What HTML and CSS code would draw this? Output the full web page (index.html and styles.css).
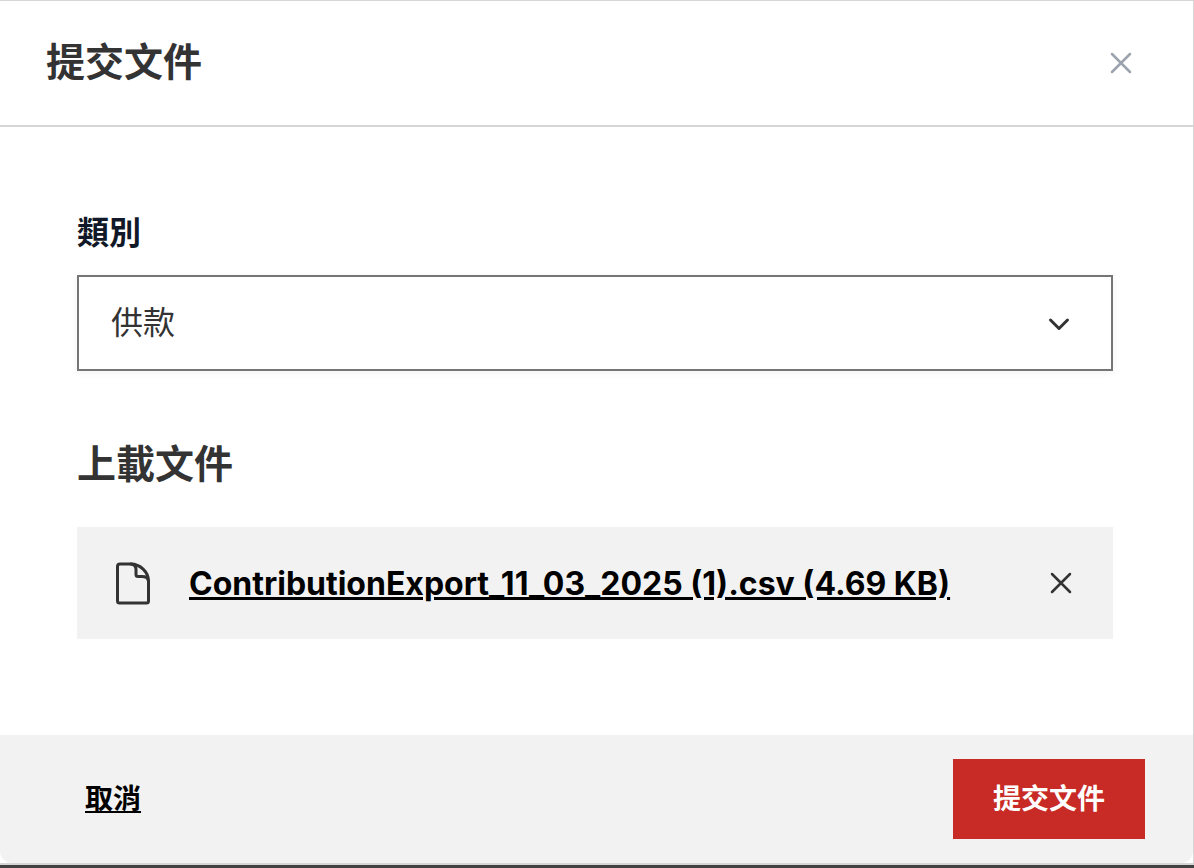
FILE: index.html
```
<!DOCTYPE html>
<html lang="zh-Hant">

<head>
    <meta charset="UTF-8">
    <meta name="viewport" content="width=device-width, initial-scale=1.0">
    <title>提交文件</title>
    <link rel="stylesheet" href="styles.css">
</head>

<body>

    <form class="modal">
        <div class="modal-header">
            <h1 class="title">提交文件</h1>
            <button type="button" class="icon-button close-button" aria-label="關閉">
                <svg width="24" height="24" viewBox="0 0 24 24">
                    <path d="M3 3L21 21M21 3L3 21"/>
                </svg>
            </button>
        </div>

        <div class="modal-body">
            <label class="label" for="category">類別</label>
            <div class="select-wrap">
                <select class="select" id="category">
                    <option>供款</option>
                </select>
                <svg class="chevron" width="24" height="24" viewBox="0 0 24 24">
                    <path d="M3.500 8L12 16.500L20.500 8"/>
                </svg>
            </div>

            <h2 class="title">上載文件</h2>
            <div class="file">
                <svg class="file-icon" width="40" height="48" viewBox="0 -1 40 48">
                    <path d="M7 4H18C27 4 35.500 12 35.500 21V41Q35.500 43 33.500 43H6.500Q4.500 43 4.500 41V6.500Q4.500 4 7 4Z"/>
                    <path d="M18 4C21.500 4.500 23 6.500 23 9.500V14.500Q23 16.500 25 16.500H29C32.500 16.500 35 18 35.500 21"/>
                </svg>
                <a class="file-link" href="#">ContributionExport_11_03_2025 (1).csv (4.69 KB)</a>
                <button type="button" class="icon-button" aria-label="移除">
                    <svg width="24" height="24" viewBox="0 0 24 24">
                        <path d="M3 3L21 21M21 3L3 21"/>
                    </svg>
                </button>
            </div>
        </div>

        <div class="modal-footer">
            <button type="button" class="cancel">取消</button>
            <button type="submit" class="submit">提交文件</button>
        </div>
    </form>

</body>

</html>
```

FILE: styles.css
```
* {
    box-sizing: border-box;
}

body {
    margin: 0;
    background-color: #434243;
    color: #333;
    font-family: Inter, "Noto Sans CJK TC", sans-serif;
}

button,
select {
    font-family: inherit;
    cursor: pointer;
}

svg {
    display: block;
    fill: none;
    stroke: #333;
    stroke-width: 2.5;
    stroke-linecap: round;
    stroke-linejoin: round;
}

.modal {
    background-color: #fff;
    border: 1px solid #d6d6d6;
    border-left: none;
    border-bottom-width: 2px;
}

.modal-header {
    display: flex;
    justify-content: space-between;
    align-items: center;
    padding: 38px 60px 38px 46px;
    border-bottom: 2px solid #d6d6d6;
}

.title {
    margin: 0;
    padding-bottom: 2px;
    font-size: 39px;
    line-height: 46px;
    font-weight: 700;
}

.icon-button {
    padding: 0;
    border: none;
    background: none;
}

.close-button svg {
    stroke: #9ca3af;
}

.modal-body {
    padding: 82px 80px 96px 77px;
}

.label {
    display: block;
    margin-bottom: 18px;
    color: #111827;
    font-size: 32px;
    line-height: 48px;
    font-weight: 700;
}

.select-wrap {
    position: relative;
    margin-bottom: 70px;
}

.select {
    display: block;
    width: 100%;
    height: 96px;
    padding: 0 32px 2px;
    border: 2px solid #757575;
    border-radius: 0;
    background-color: #fff;
    color: #333;
    font-size: 32px;
    appearance: none;
    box-shadow: 0 2px 8px rgba(0, 0, 0, 0.05);
}

.chevron {
    position: absolute;
    top: 37px;
    right: 42px;
    stroke-width: 3;
    pointer-events: none;
}

.file {
    display: flex;
    align-items: center;
    height: 112px;
    margin-top: 38px;
    padding: 0 40px 0 36px;
    background-color: #f2f2f2;
}

.file-icon {
    margin-right: 36px;
    stroke-width: 3;
}

.file-link {
    flex: 1;
    padding-top: 2px;
    color: #000;
    font-size: 32px;
    line-height: 48px;
    font-weight: 700;
}

.modal-footer {
    display: flex;
    justify-content: space-between;
    align-items: center;
    padding: 24px 48px 24px 85px;
    border-radius: 0 0 12px 12px;
    background-color: #f2f2f2;
}

.cancel,
.submit {
    border: none;
    font-size: 28px;
    line-height: 40px;
    font-weight: 700;
}

.cancel {
    padding: 0;
    background: none;
    color: #000;
    text-decoration: underline;
}

.submit {
    padding: 20px 40px;
    background-color: #c82a25;
    color: #fff;
}
```
